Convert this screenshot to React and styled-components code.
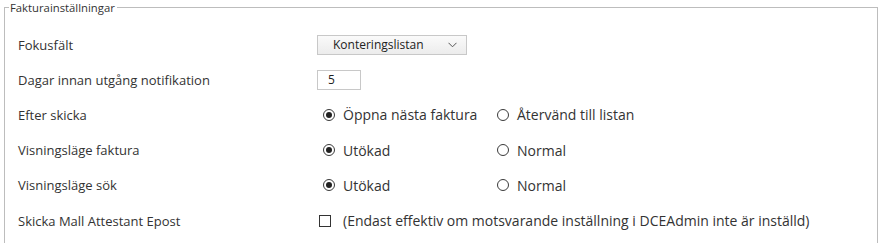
import React from "react";
import styled, { createGlobalStyle } from "styled-components";

const Global = createGlobalStyle`
  html, body { margin: 0; padding: 0; background: #fff; }
  body { padding-top: 1px; font-family: "Open Sans", "Noto Sans", sans-serif; color: #333; }
`;

const Fieldset = styled.fieldset`
  margin: 0 3px 0 4px;
  padding: 0 0 20px 0;
  border: 1px solid #bdbdbd;
  min-height: 260px;
`;

const Legend = styled.legend`
  margin-left: 4px;
  padding: 0 2px 0 1px;
  font-size: 11.3px;
  line-height: 13px;
  color: #333;
`;

const Rows = styled.div`
  display: flex;
  flex-direction: column;
  padding: 13px 0 0 13px;
`;

const Row = styled.div`
  display: grid;
  grid-template-columns: 299px 1fr;
  align-items: center;
  height: 35.2px;
`;

const Label = styled.div`
  font-size: 13px;
  color: #333;
`;

const Control = styled.div`
  display: flex;
  align-items: center;
`;

const SelectBox = styled.div`
  box-sizing: border-box;
  width: 150px;
  height: 20px;
  border: 1px solid #c8c8c8;
  background: linear-gradient(#fafafa, #ececec);
  display: flex;
  align-items: center;
  justify-content: space-between;
  padding: 0 9px 0 15px;
  font-size: 12px;
  color: #222;
`;

const NumberInput = styled.div`
  box-sizing: border-box;
  width: 44px;
  height: 20px;
  border: 1px solid #c8c8c8;
  background: #fff;
  display: flex;
  align-items: center;
  padding-left: 10px;
  font-size: 12px;
  color: #222;
`;

const Option = styled.label`
  display: flex;
  align-items: center;
  width: ${(p) => p.$width || 174}px;
  font-size: 14px;
  color: #333;
`;

const Radio = styled.span`
  box-sizing: border-box;
  width: 12px;
  height: 12px;
  margin: 0 8px 0 6px;
  border: 1px solid #3a3a3a;
  border-radius: 50%;
  display: flex;
  align-items: center;
  justify-content: center;
  flex: none;
  &::after {
    content: "";
    width: 6px;
    height: 6px;
    border-radius: 50%;
    background: ${(p) => (p.$checked ? "#222" : "transparent")};
  }
`;

const Check = styled.span`
  box-sizing: border-box;
  width: 12px;
  height: 12px;
  margin: 0 12px 0 2px;
  border: 1px solid #333;
  background: #fff;
  flex: none;
`;

const Chevron = () => (
  <svg width="9" height="6" viewBox="0 0 9 6">
    <path d="M0.5 0.8 L4.5 4.8 L8.5 0.8" fill="none" stroke="#555" strokeWidth="1" />
  </svg>
);

const RadioGroup = ({ options, checked }) => (
  <Control>
    {options.map((o, i) => (
      <Option key={o}>
        <Radio $checked={i === checked} />
        {o}
      </Option>
    ))}
  </Control>
);

export default function App() {
  return (
    <>
      <Global />
      <Fieldset>
        <Legend>Fakturainställningar</Legend>
        <Rows>
          <Row>
            <Label>Fokusfält</Label>
            <Control>
              <SelectBox>
                Konteringslistan
                <Chevron />
              </SelectBox>
            </Control>
          </Row>
          <Row>
            <Label>Dagar innan utgång notifikation</Label>
            <Control>
              <NumberInput>5</NumberInput>
            </Control>
          </Row>
          <Row>
            <Label>Efter skicka</Label>
            <RadioGroup options={["Öppna nästa faktura", "Återvänd till listan"]} checked={0} />
          </Row>
          <Row>
            <Label>Visningsläge faktura</Label>
            <RadioGroup options={["Utökad", "Normal"]} checked={0} />
          </Row>
          <Row>
            <Label>Visningsläge sök</Label>
            <RadioGroup options={["Utökad", "Normal"]} checked={0} />
          </Row>
          <Row>
            <Label>Skicka Mall Attestant Epost</Label>
            <Control>
              <Option $width={560}>
                <Check />
                (Endast effektiv om motsvarande inställning i DCEAdmin inte är inställd)
              </Option>
            </Control>
          </Row>
        </Rows>
      </Fieldset>
    </>
  );
}
